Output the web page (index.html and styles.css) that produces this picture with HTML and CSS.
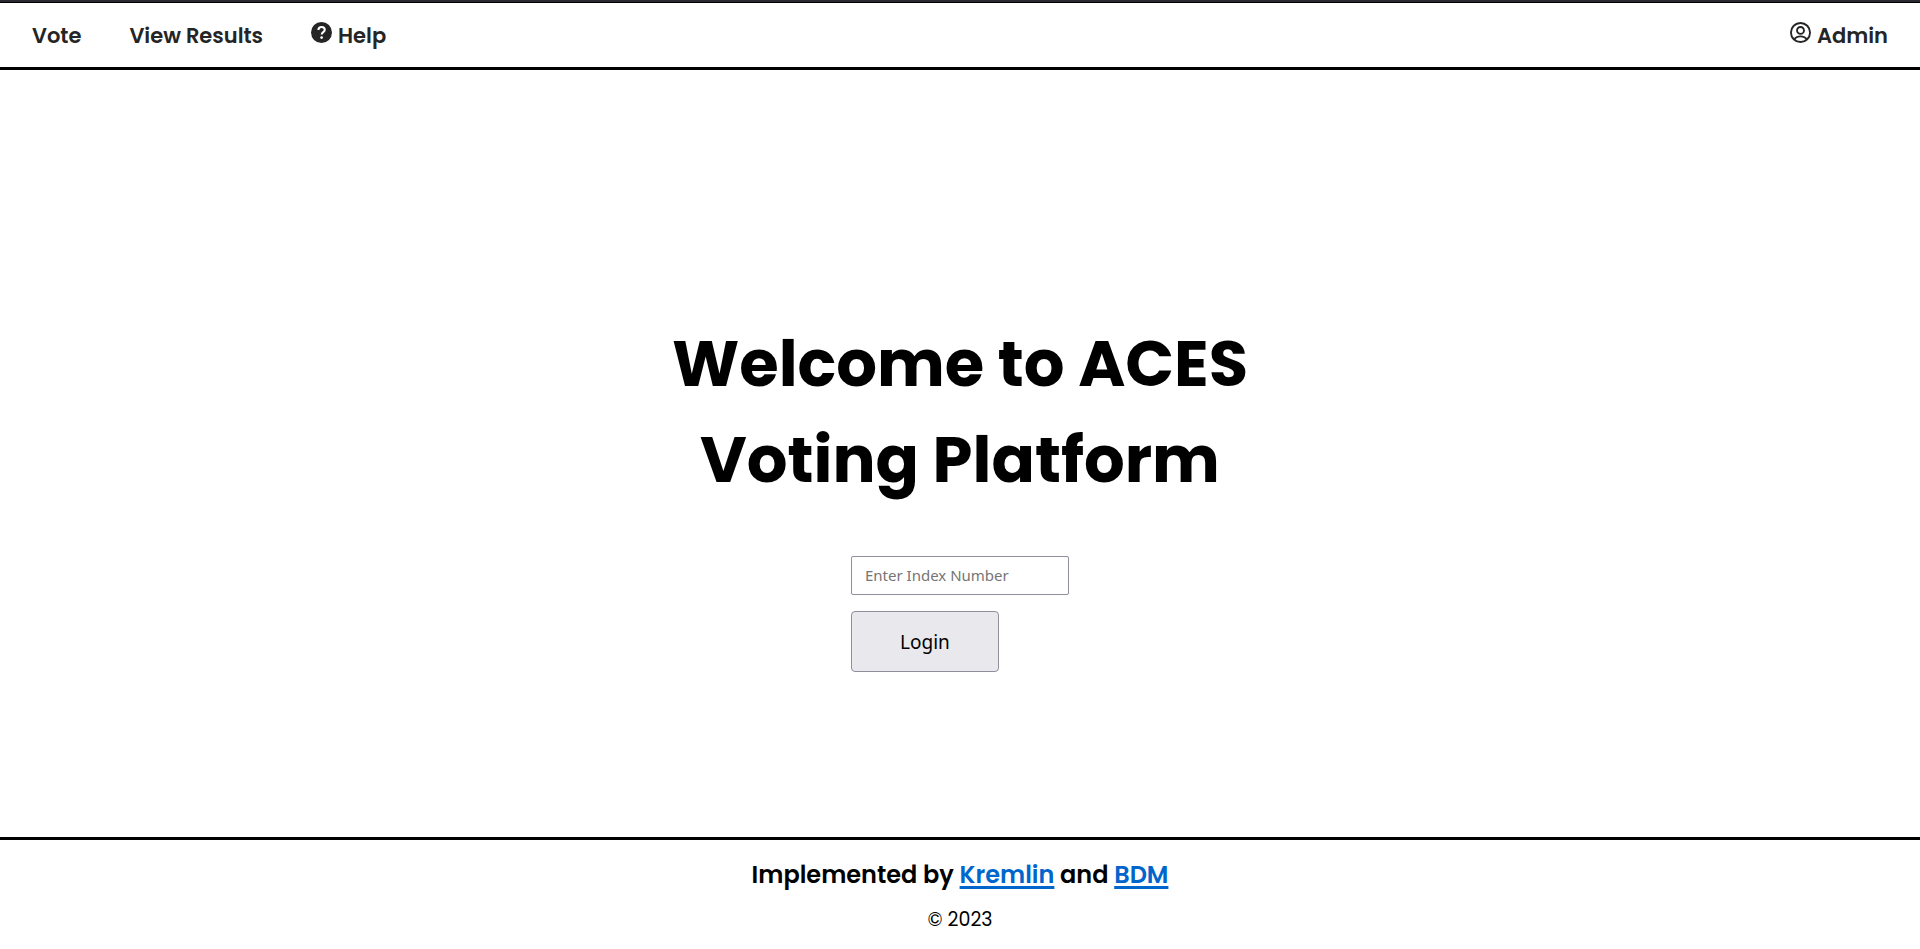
FILE: index.html
```html
<!DOCTYPE html>
<html lang="en">
<head>
<meta charset="utf-8">
<title>ACES Voting Platform</title>
<meta name="viewport" content="width=device-width, initial-scale=1">
<link rel="stylesheet" href="styles.css">
</head>
<body>
<header class="site-header">
  <nav class="nav">
    <a class="nav-link" href="#vote">Vote</a>
    <a class="nav-link" href="#results">View Results</a>
    <a class="nav-link" href="#help">
      <svg class="icon" viewBox="0 0 20 20" aria-hidden="true"><circle cx="10" cy="10" r="10" fill="currentColor"/><path d="M7 7.6C7.1 5.8 8.3 4.8 10.1 4.8s3 1 3 2.6c0 2.3-2.9 2.1-2.9 4.4" fill="none" stroke="#fff" stroke-width="2"/><circle cx="10.1" cy="14.8" r="1.3" fill="#fff"/></svg>
      <span>Help</span>
    </a>
    <a class="nav-link nav-admin" href="#admin">
      <svg class="icon" viewBox="0 0 20 20" fill="none" stroke="currentColor" stroke-width="1.8" aria-hidden="true"><circle cx="10" cy="10" r="9.1"/><circle cx="10" cy="8" r="3.3"/><path d="M4.2 16.6C5.2 14.5 7.3 13.7 10 13.7s4.8.8 5.8 2.9"/></svg>
      <span>Admin</span>
    </a>
  </nav>
</header>
<main class="main">
  <h1 class="title">Welcome to ACES<br>Voting Platform</h1>
  <form class="login">
    <input class="field" type="text" placeholder="Enter Index Number" aria-label="Index number">
    <button class="submit" type="button">Login</button>
  </form>
</main>
<footer class="site-footer">
  <p class="credits">Implemented by <a class="credit-link" href="#kremlin">Kremlin</a> and <a class="credit-link" href="#bdm">BDM</a></p>
  <p class="copyright">© 2023</p>
</footer>
</body>
</html>
```
FILE: styles.css
```css
* {
  box-sizing: border-box;
}

body {
  margin: 0;
  min-height: 100vh;
  display: flex;
  flex-direction: column;
  background: #fff;
  color: #000;
  font-family: Poppins, Inter, sans-serif;
  border-top: 2px solid #2b2a33;
}

.site-header {
  border-top: 1px solid #000;
  border-bottom: 3px solid #000;
}

.nav {
  display: flex;
  align-items: center;
  gap: 48px;
  padding: 17px 32px 15px;
}

.nav-link {
  display: flex;
  gap: 6px;
  color: #252525;
  font-size: 21px;
  font-weight: 600;
  line-height: 32px;
  text-decoration: none;
}

.nav-admin {
  margin-left: auto;
}

.icon {
  width: 21px;
  height: 21px;
  margin-top: 2px;
}

.main {
  flex: 1;
  display: flex;
  flex-direction: column;
  align-items: center;
  justify-content: center;
  gap: 48px;
  padding-top: 80px;
}

.title {
  margin: 0;
  font-size: 64px;
  font-weight: 700;
  line-height: 96px;
  text-align: center;
}

.login {
  display: flex;
  flex-direction: column;
  align-items: flex-start;
  gap: 16px;
}

.field,
.submit {
  border: 1px solid #8f8f9d;
  font-family: Tahoma, "Noto Sans", sans-serif;
}

.field {
  width: 218px;
  height: 39px;
  padding: 0 13px;
  border-radius: 2px;
  font-size: 15px;
}

.field::placeholder {
  color: #757575;
}

.submit {
  padding: 15px 48px 13px;
  border-radius: 4px;
  background: #e9e9ed;
  color: #000;
  font-size: 19px;
  line-height: 31px;
}

.site-footer {
  padding: 17px 0 15px;
  border-top: 3px solid #000;
  text-align: center;
}

.credits {
  margin: 0 0 12px;
  font-size: 24px;
  font-weight: 600;
  line-height: 36px;
}

.credit-link {
  color: #0066cc;
  text-decoration-thickness: 3px;
  text-underline-offset: 3px;
  text-decoration-skip-ink: none;
}

.copyright {
  margin: 0;
  font-size: 19px;
  line-height: 29px;
}
```
